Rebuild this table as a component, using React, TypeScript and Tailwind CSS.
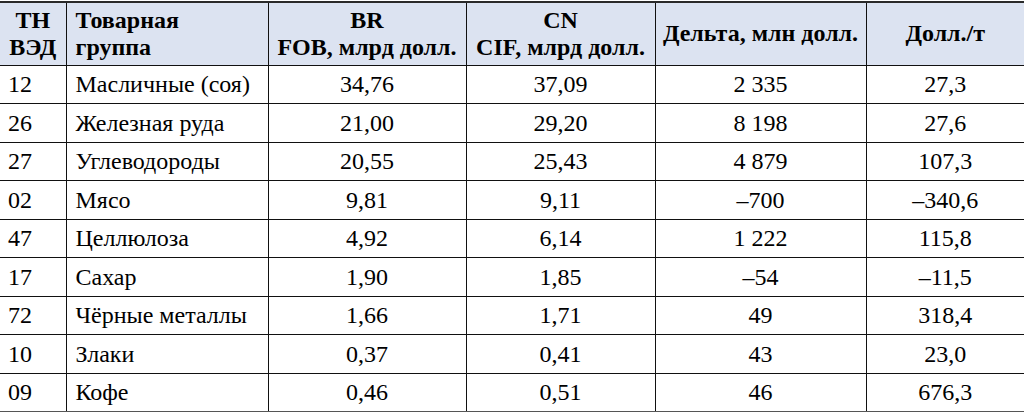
const rows: [string, string, string, string, string, string][] = [
  ['12', 'Масличные (соя)', '34,76', '37,09', '2 335', '27,3'],
  ['26', 'Железная руда', '21,00', '29,20', '8 198', '27,6'],
  ['27', 'Углеводороды', '20,55', '25,43', '4 879', '107,3'],
  ['02', 'Мясо', '9,81', '9,11', '–700', '–340,6'],
  ['47', 'Целлюлоза', '4,92', '6,14', '1 222', '115,8'],
  ['17', 'Сахар', '1,90', '1,85', '–54', '–11,5'],
  ['72', 'Чёрные металлы', '1,66', '1,71', '49', '318,4'],
  ['10', 'Злаки', '0,37', '0,41', '43', '23,0'],
  ['09', 'Кофе', '0,46', '0,51', '46', '676,3'],
]

export default function App() {
  return (
    <div className="w-[1024px] h-[412px] overflow-hidden bg-white text-black font-['Liberation_Serif','Times_New_Roman',serif]">
      <div className="h-[1px]" />
      <table className="w-[1024px] border-collapse table-fixed">
        <colgroup>
          <col className="w-[66px]" />
          <col className="w-[202px]" />
          <col className="w-[198px]" />
          <col className="w-[189px]" />
          <col className="w-[211px]" />
          <col className="w-[158px]" />
        </colgroup>
        <thead>
          <tr className="h-[63px] bg-[#dce3f1] text-[24px] font-bold leading-[27px] border-t-2 border-[#2a2a2a]">
            <th className="border-r border-b border-[#111] text-center align-middle font-bold">ТН<br />ВЭД</th>
            <th className="border-x border-b border-[#111] text-left pl-[9px] align-middle font-bold">Товарная<br />группа</th>
            <th className="border-x border-b border-[#111] text-center align-middle font-bold whitespace-nowrap">BR<br />FOB, млрд долл.</th>
            <th className="border-x border-b border-[#111] text-center align-middle font-bold whitespace-nowrap">CN<br />CIF, млрд долл.</th>
            <th className="border-x border-b border-[#111] text-center align-middle font-bold whitespace-nowrap">Дельта, млн долл.</th>
            <th className="border-l border-b border-[#111] text-center align-middle font-bold">Долл./т</th>
          </tr>
        </thead>
        <tbody className="text-[24px]">
          {rows.map((r, i) => (
            <tr key={r[0]} className={i === rows.length - 1 ? 'h-[38.5px] border-b-2 border-[#555]' : 'h-[38.5px] border-b border-[#111]'}>
              <td className="border-r border-[#111] pl-[8px] align-middle">{r[0]}</td>
              <td className="border-x border-[#111] pl-[9px] align-middle whitespace-nowrap">{r[1]}</td>
              <td className="border-x border-[#111] text-center align-middle">{r[2]}</td>
              <td className="border-x border-[#111] text-center align-middle">{r[3]}</td>
              <td className="border-x border-[#111] text-center align-middle">{r[4]}</td>
              <td className="border-l border-[#111] text-center align-middle">{r[5]}</td>
            </tr>
          ))}
        </tbody>
      </table>
    </div>
  )
}
